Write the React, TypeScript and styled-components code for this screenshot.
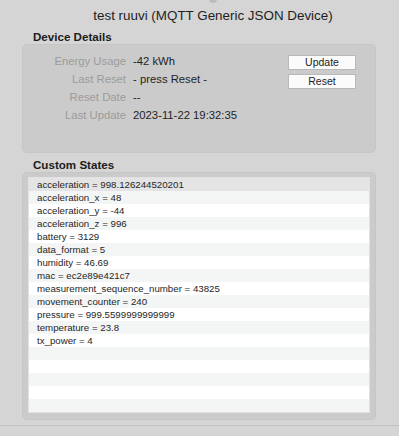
import React from 'react';
import styled, { createGlobalStyle } from 'styled-components';

interface DetailRow {
  label: string;
  value: string;
}

const details: DetailRow[] = [
  { label: 'Energy Usage', value: '-42 kWh' },
  { label: 'Last Reset', value: '- press Reset -' },
  { label: 'Reset Date', value: '--' },
  { label: 'Last Update', value: '2023-11-22 19:32:35' },
];

const states: string[] = [
  'acceleration = 998.126244520201',
  'acceleration_x = 48',
  'acceleration_y = -44',
  'acceleration_z = 996',
  'battery = 3129',
  'data_format = 5',
  'humidity = 46.69',
  'mac = ec2e89e421c7',
  'measurement_sequence_number = 43825',
  'movement_counter = 240',
  'pressure = 999.5599999999999',
  'temperature = 23.8',
  'tx_power = 4',
];

const EMPTY_ROWS = 5;

const App: React.FC = () => {
  const rows = [...states, ...Array(EMPTY_ROWS).fill('')];

  return (
    <>
      <GlobalStyle />
      <Window>
        <TitleBar>
          <Handle />
          <Title>test ruuvi (MQTT Generic JSON Device)</Title>
        </TitleBar>

        <SectionLabel>Device Details</SectionLabel>
        <GroupBox>
          <DetailsGrid>
            {details.map(d => (
              <React.Fragment key={d.label}>
                <FieldLabel>{d.label}</FieldLabel>
                <FieldValue>{d.value}</FieldValue>
              </React.Fragment>
            ))}
          </DetailsGrid>
          <ButtonColumn>
            <PushButton>Update</PushButton>
            <PushButton>Reset</PushButton>
          </ButtonColumn>
        </GroupBox>

        <SectionLabel>Custom States</SectionLabel>
        <ListBox>
          <StateList>
            {rows.map((text, i) => (
              <StateRow key={i} index={i} selected={i === 0}>
                {text}
              </StateRow>
            ))}
          </StateList>
        </ListBox>

        <Footer />
      </Window>
    </>
  );
};

const GlobalStyle = createGlobalStyle`
  html, body {
    margin: 0;
    padding: 0;
    background: #d5d5d5;
  }
  body {
    font-family: "Liberation Sans", Arial, sans-serif;
    -webkit-font-smoothing: antialiased;
  }
`;

const Window = styled.div`
  width: 399px;
  height: 436px;
  overflow: hidden;
  display: flex;
  flex-direction: column;
  background: #d5d5d5;
`;

const TitleBar = styled.div`
  position: relative;
  height: 30px;
  display: flex;
  align-items: center;
  justify-content: center;
`;

const Handle = styled.div`
  position: absolute;
  top: -5px;
  left: 209px;
  width: 8px;
  height: 8px;
  border-radius: 50%;
  background: #bcbcbc;
`;

const Title = styled.h1`
  margin: 0;
  padding-left: 27px;
  font-size: 13.4px;
  font-weight: 400;
  color: #1e1e1e;
`;

const SectionLabel = styled.h2`
  margin: 0;
  padding-left: 33px;
  height: 14px;
  line-height: 14px;
  font-size: 11.6px;
  font-weight: 700;
  color: #1c1c1c;
`;

const GroupBox = styled.div`
  margin: 0 23px 5px 22px;
  height: 109px;
  box-sizing: border-box;
  border: 1px solid #c6c6c6;
  border-radius: 5px;
  background: #cbcbcb;
  display: flex;
  align-items: flex-start;
`;

const DetailsGrid = styled.div`
  display: grid;
  grid-template-columns: 103px auto;
  column-gap: 7px;
  grid-auto-rows: 18px;
  padding-top: 7px;
  flex: 1;
`;

const FieldLabel = styled.span`
  text-align: right;
  font-size: 11.3px;
  line-height: 18px;
  color: #9b9b9b;
`;

const FieldValue = styled.span`
  font-size: 11.3px;
  line-height: 18px;
  color: #1f1f1f;
`;

const ButtonColumn = styled.div`
  display: flex;
  flex-direction: column;
  gap: 4px;
  padding-top: 10px;
  margin-right: 19px;
`;

const PushButton = styled.button`
  width: 68px;
  height: 15px;
  padding: 0;
  border: 1px solid #b9b9b9;
  background: #fbfbfb;
  font-family: inherit;
  font-size: 10.5px;
  line-height: 13px;
  color: #222;
  cursor: pointer;
`;

const ListBox = styled.div`
  margin: 0 23px 0 22px;
  height: 248px;
  box-sizing: border-box;
  border: 1px solid #c6c6c6;
  border-radius: 5px;
  background: #cbcbcb;
  padding: 4px 5px 6px 5px;
`;

const StateList = styled.div`
  height: 100%;
  overflow: hidden;
  background: #ffffff;
  border: 1px solid #e2e2e2;
  box-sizing: border-box;
`;

const StateRow = styled.div<{ index: number; selected: boolean }>`
  height: 13px;
  line-height: 13px;
  padding-left: 8px;
  font-size: 9.7px;
  color: #262626;
  white-space: nowrap;
  background: ${p => (p.selected ? '#e4e4e4' : p.index % 2 === 1 ? '#f4f5f5' : '#ffffff')};
`;

const Footer = styled.div`
  margin-top: 5px;
  border-top: 1px solid #c3c3c3;
  flex: 1;
`;

export default App;
